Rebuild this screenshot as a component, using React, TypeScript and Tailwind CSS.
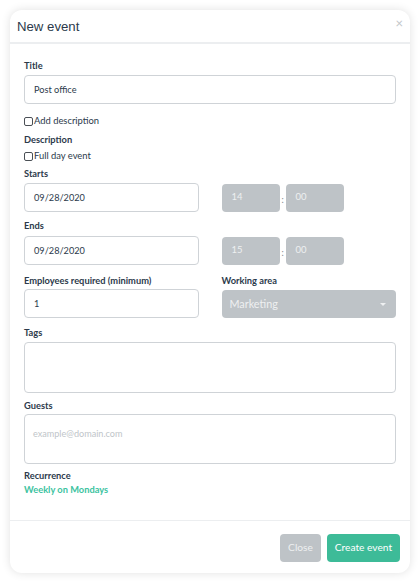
import React from 'react';

const Label: React.FC<{ children: React.ReactNode; className?: string }> = ({ children, className = '' }) => (
  <div className={`text-[9.3px] leading-[14px] font-bold text-[#2c3a4b] ${className}`}>{children}</div>
);

const TextBox: React.FC<{ value?: string; className?: string }> = ({ value, className = '' }) => (
  <div className={`h-[29px] border border-[#cfd3d7] rounded-[4px] bg-white flex items-center px-[9px] text-[9.2px] text-[#2c3a4b] ${className}`}>
    {value}
  </div>
);

const TimeBox: React.FC<{ value: string }> = ({ value }) => (
  <div className="w-[58px] h-[28px] rounded-[4px] bg-[#bec3c7] flex items-center px-[10px] text-[9.5px] text-[#eef0f1]">
    {value}
  </div>
);

const TimeRow: React.FC<{ h: string; m: string }> = ({ h, m }) => (
  <div className="flex items-center">
    <TimeBox value={h} />
    <span className="w-[6px] text-center text-[9px] text-[#7d868e] pt-[4px]">:</span>
    <TimeBox value={m} />
  </div>
);

const Check: React.FC<{ label: string }> = ({ label }) => (
  <label className="flex items-center text-[9.4px] leading-[14px] text-[#2c3a4b]">
    <span className="w-[9px] h-[9px] border border-[#4a4f55] rounded-[2px] mr-[1px] bg-white" />
    {label}
  </label>
);

export default function App() {
  return (
    <div className="w-[420px] h-[583px] bg-white p-[10px] font-['Lato',sans-serif]">
      <div className="h-[563px] rounded-[12px] bg-white shadow-[0_0_10px_rgba(0,0,0,0.12)] flex flex-col">
        <div className="h-[34px] border-b-2 border-[#eceef0] flex items-center justify-between pl-[7px] pr-[7px]">
          <span className="font-['Liberation_Sans',sans-serif] text-[13.2px] text-[#2c3a4b] pt-[1px]">New event</span>
          <span className="text-[13px] leading-none text-[#c2c6ca] -mt-[6px]">×</span>
        </div>

        <div className="px-[14px] pt-[15px] flex-1">
          <Label className="mb-[2px]">Title</Label>
          <TextBox value="Post office" className="h-[28px]" />

          <div className="mt-[10px]">
            <Check label="Add description" />
          </div>
          <Label className="mt-[5px]">Description</Label>
          <div className="mt-[2px]">
            <Check label="Full day event" />
          </div>

          <Label className="mt-[4px] mb-[2px]">Starts</Label>
          <div className="grid grid-cols-2 gap-[23px]">
            <TextBox value="09/28/2020" className="h-[29px]" />
            <TimeRow h="14" m="00" />
          </div>

          <Label className="mt-[7px] mb-[3px]">Ends</Label>
          <div className="grid grid-cols-2 gap-[23px]">
            <TextBox value="09/28/2020" className="h-[29px]" />
            <TimeRow h="15" m="00" />
          </div>

          <div className="grid grid-cols-2 gap-[23px] mt-[9px]">
            <div>
              <Label className="mb-[1px]">Employees required (minimum)</Label>
              <TextBox value="1" className="h-[29px]" />
            </div>
            <div>
              <Label className="mb-[2px]">Working area</Label>
              <div className="h-[28px] rounded-[4px] bg-[#bec3c7] flex items-center justify-between pl-[8px] pr-[10px] text-[10.8px] text-[#eef0f1]">
                <span>Marketing</span>
                <span className="w-0 h-0 border-l-[3.5px] border-r-[3.5px] border-t-[3.5px] border-l-transparent border-r-transparent border-t-[#eef0f1]" />
              </div>
            </div>
          </div>

          <Label className="mt-[8px] mb-[2px]">Tags</Label>
          <div className="h-[51px] border border-[#cfd3d7] rounded-[4px] bg-white" />

          <Label className="mt-[6px] mb-[1px]">Guests</Label>
          <div className="h-[50px] border border-[#cfd3d7] rounded-[4px] bg-white px-[8px] pt-[13px] text-[9.1px] leading-[12px] text-[#c0c5c9]">
            example@domain.com
          </div>

          <Label className="mt-[5px]">Recurrence</Label>
          <div className="text-[9.3px] leading-[14px] font-bold text-[#3cc39f]">Weekly on Mondays</div>
        </div>

        <div className="border-t border-[#eceef0] h-[53px] flex items-start justify-end gap-[6px] pr-[10px] pt-[13px]">
          <button className="h-[28px] w-[41px] rounded-[4px] bg-[#bec3c7] text-[10.2px] text-[#eef0f1]">Close</button>
          <button className="h-[28px] w-[73px] rounded-[4px] bg-[#3dbb98] text-[10.2px] text-white">Create event</button>
        </div>
      </div>
    </div>
  );
}
